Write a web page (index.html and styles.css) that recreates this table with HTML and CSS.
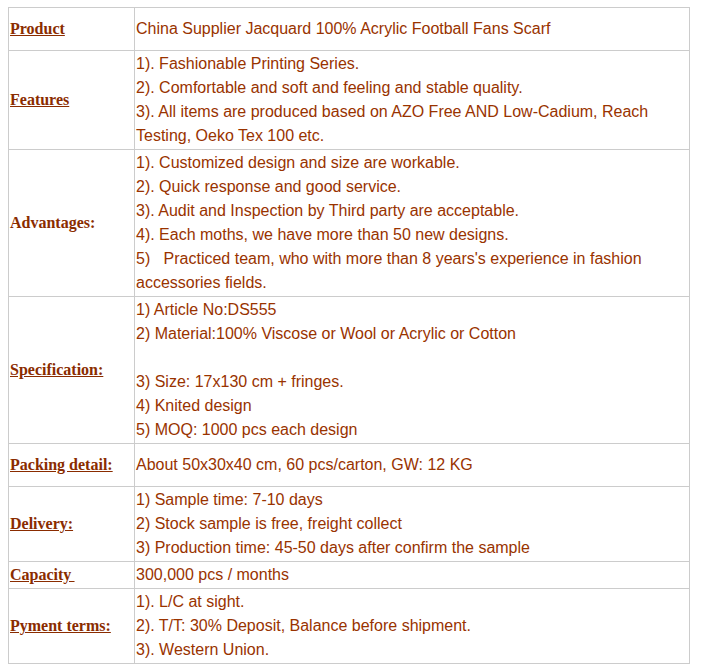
FILE: index.html
```html
<!DOCTYPE html>
<html>
<head>
<meta charset="utf-8">
<link rel="stylesheet" href="styles.css">
</head>
<body>
<table class="spec">
  <tr class="short">
    <td class="label"><u>Product</u></td>
    <td class="val">China Supplier Jacquard 100% Acrylic Football Fans Scarf</td>
  </tr>
  <tr>
    <td class="label"><u>Features</u></td>
    <td class="val">1). Fashionable Printing Series.<br>2). Comfortable and soft and feeling and stable quality.<br>3). All items are produced based on AZO Free AND Low-Cadium, Reach Testing, Oeko Tex 100 etc.</td>
  </tr>
  <tr>
    <td class="label">Advantages:</td>
    <td class="val">1). Customized design and size are workable.<br>2). Quick response and good service.<br>3). Audit and Inspection by Third party are acceptable.<br>4). Each moths, we have more than 50 new designs.<br>5)&nbsp;&nbsp;&nbsp;Practiced team, who with more than 8 years's experience in fashion accessories fields.</td>
  </tr>
  <tr>
    <td class="label"><u>Specification:</u></td>
    <td class="val">1) Article No:DS555<br>2) Material:100% Viscose or Wool or Acrylic or Cotton<br><br>3) Size: 17x130 cm + fringes.<br>4) Knited design<br>5) MOQ: 1000 pcs each design</td>
  </tr>
  <tr class="short">
    <td class="label"><u>Packing detail:</u></td>
    <td class="val">About 50x30x40 cm, 60 pcs/carton, GW: 12 KG</td>
  </tr>
  <tr>
    <td class="label"><u>Delivery:</u></td>
    <td class="val">1) Sample time: 7-10 days<br>2) Stock sample is free, freight collect<br>3) Production time: 45-50 days after confirm the sample</td>
  </tr>
  <tr>
    <td class="label"><u>Capacity&#8201;</u></td>
    <td class="val">300,000 pcs / months</td>
  </tr>
  <tr>
    <td class="label"><u>Pyment terms:</u></td>
    <td class="val">1). L/C at sight.<br>2). T/T: 30% Deposit, Balance before shipment.<br>3). Western Union.</td>
  </tr>
</table>
</body>
</html>
```
FILE: styles.css
```css
body {
  margin: 7px 8px;
  background: #fff;
}
.spec {
  border-collapse: collapse;
  width: 682px;
  table-layout: fixed;
}
.spec td {
  border: 1px solid #cccccc;
  padding: 1px;
  vertical-align: middle;
  line-height: 24px;
  color: #993300;
}
.spec .label {
  width: 123px;
  font-family: "Liberation Serif", "Times New Roman", serif;
  font-weight: bold;
  font-size: 16px;
  color: #8a2c00;
}
.spec .val {
  font-family: "Liberation Sans", Arial, sans-serif;
  font-size: 16px;
}
.spec .short td {
  height: 40px;
}
```
